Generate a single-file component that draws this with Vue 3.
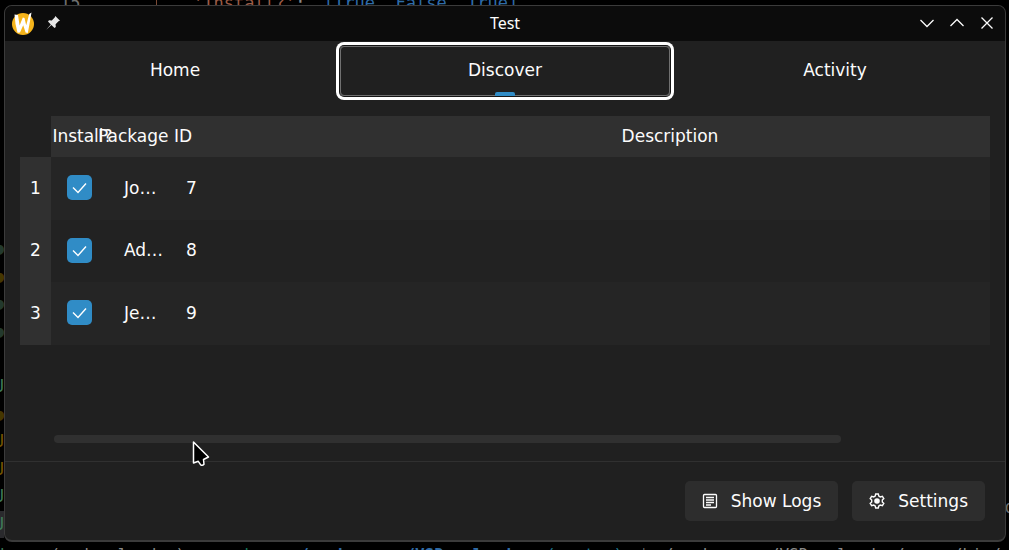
<script setup>
import { ref } from 'vue'

const tabs = ['Home', 'Discover', 'Activity']
const active = ref('Discover')

const rows = ref([
  { install: true, id: 'Jo…', description: '7' },
  { install: true, id: 'Ad…', description: '8' },
  { install: true, id: 'Je…', description: '9' },
])

const marks = [
  { text: '●', tone: 'green' },
  { text: '●', tone: 'olive' },
  { text: '●', tone: 'green' },
  { text: '●', tone: 'green' },
  { text: '', tone: 'green' },
  { text: 'U', tone: 'mint' },
  { text: '●', tone: 'olive' },
  { text: 'U', tone: 'gold' },
  { text: 'U', tone: 'gold' },
  { text: 'U', tone: 'mint' },
  { text: 'U', tone: 'mint selected' },
]

const prompt = [
  { text: 'h', tone: 'mint' },
  { text: '○', tone: 'blue' },
  { text: '(vsdownloader)', tone: 'grey' },
  { text: 'vscode', tone: 'teal' },
  { text: '➜', tone: 'grey' },
  { text: '/workspaces/VSDownloader', tone: 'blue bold' },
  { text: '(master)', tone: 'cyan' },
  { text: '$', tone: 'grey' },
  { text: '/workspaces/VSDownloader/.venv/bin/', tone: 'grey' },
]
</script>

<template>
  <div class="desktop">
    <div class="editor" aria-hidden="true">
      <span class="line-no">15</span>
      <span class="guide"></span>
      <code><span class="string">'Install?'</span><span class="grey">: </span><span class="blue list">[True, False, True]</span></code>
    </div>
    <div class="gutter" aria-hidden="true">
      <span v-for="(m, i) in marks" :key="i" :class="m.tone">{{ m.text }}</span>
    </div>
    <div class="edge" aria-hidden="true">d</div>
    <div class="terminal" aria-hidden="true">
      <span v-for="(p, i) in prompt" :key="i" :class="p.tone">{{ p.text }}</span>
    </div>

    <main class="window">
      <header class="titlebar">
        <div class="side">
          <svg class="logo" viewBox="0 0 24 24">
            <circle cx="12" cy="13" r="11" fill="#f5b41b" />
            <path d="M3.5 3.5 L7 4 L8.6 14.5 L11.8 6.5 L13.5 7 L15.2 14.2 L18.2 3 L20.5 1.5 L18.5 13 L16.8 22 L14.6 21.5 L12.2 14.2 L9 21.5 L6.5 21.8 L4.5 13 Z" fill="#fff" />
          </svg>
          <button class="plain" aria-label="Keep above">
            <svg class="pin" viewBox="0 0 16 16">
              <path d="M10.3 1 L15 5.7 L13.5 6.3 L10.6 9.2 L10.8 12 L9.5 13 L6.4 10 L1.2 14.8 L5.8 9.4 L3 6.5 L4 5.2 L6.8 5.4 L9.7 2.5 Z" fill="#e8e8e8" />
            </svg>
          </button>
        </div>
        <h1>Test</h1>
        <div class="side controls">
          <button class="plain" aria-label="Minimize"><svg viewBox="0 0 16 16"><path d="M1.5 5 L8 11.5 L14.5 5" /></svg></button>
          <button class="plain" aria-label="Maximize"><svg viewBox="0 0 16 16"><path d="M1.5 11 L8 4.5 L14.5 11" /></svg></button>
          <button class="plain" aria-label="Close"><svg viewBox="0 0 16 16"><path d="M2.5 2.5 L13.5 13.5 M13.5 2.5 L2.5 13.5" /></svg></button>
        </div>
      </header>

      <nav class="tabs" role="tablist">
        <button
          v-for="t in tabs"
          :key="t"
          class="tab"
          :class="{ active: t === active }"
          role="tab"
          :aria-selected="t === active"
          @click="active = t"
        >{{ t }}</button>
      </nav>

      <section class="view">
        <table>
          <colgroup>
            <col class="c-num" /><col class="c-check" /><col class="c-id" /><col />
          </colgroup>
          <thead>
            <tr>
              <td class="corner"></td>
              <th scope="col"><div>Install?</div></th>
              <th scope="col"><div>Package ID</div></th>
              <th scope="col"><div>Description</div></th>
            </tr>
          </thead>
          <tbody>
            <tr v-for="(r, i) in rows" :key="i">
              <th scope="row">{{ i + 1 }}</th>
              <td>
                <label class="check">
                  <input v-model="r.install" type="checkbox" :aria-label="'Install ' + r.id" />
                  <svg v-if="r.install" viewBox="0 0 25 25"><path d="M6 12.5 L11 17.5 L19 8.5" /></svg>
                </label>
              </td>
              <td>{{ r.id }}</td>
              <td>{{ r.description }}</td>
            </tr>
          </tbody>
        </table>
        <div class="scrollbar"><div class="thumb"></div></div>
      </section>

      <footer class="actions">
        <button class="action">
          <svg viewBox="0 0 18 18">
            <rect x="2.5" y="2.5" width="13" height="13" rx="1" />
            <path d="M5 5.5 H13 M5 8 H13 M5 10.5 H13 M5 13 H10" />
          </svg>
          Show Logs
        </button>
        <button class="action">
          <svg viewBox="-1 -1 18 18">
            <path class="cog" d="M6.7 1 H9.3 L9.8 3 L11.3 3.9 L13.4 3.3 L14.8 5.6 L13.3 7.1 V8.9 L14.8 10.4 L13.4 12.7 L11.3 12.1 L9.8 13 L9.3 15 H6.7 L6.2 13 L4.7 12.1 L2.6 12.7 L1.2 10.4 L2.7 8.9 V7.1 L1.2 5.6 L2.6 3.3 L4.7 3.9 L6.2 3 Z" />
            <circle class="hub" cx="8" cy="8" r="2.8" />
          </svg>
          Settings
        </button>
      </footer>
    </main>

    <svg class="cursor" viewBox="0 0 18 28" aria-hidden="true">
      <path d="M1.5 2 V23 L6.3 21.3 L8.7 24.8 Q10.5 26 12 24.3 L11.5 19.5 L16.5 17 Z" />
    </svg>
  </div>
</template>

<style>
body {
  background: #000;
}
</style>

<style scoped>
* {
  box-sizing: border-box;
}

.desktop {
  position: relative;
  height: 100vh;
  overflow: hidden;
  background: #000;
  color: #fcfcfc;
  font: 17px/24px "DejaVu Sans", sans-serif;
}

button {
  font: inherit;
  color: inherit;
  border: 0;
}

.editor,
.gutter,
.edge,
.terminal {
  position: absolute;
  font-family: "DejaVu Sans Mono", monospace;
  white-space: pre;
}

.editor {
  top: -7px;
  left: 60px;
  display: flex;
  line-height: 20px;
}

.editor code {
  font: inherit;
  margin-left: 36px;
}

.list {
  margin-left: 8px;
}

.line-no {
  width: 96px;
  color: #6e6e6e;
}

.guide {
  width: 1px;
  background: #7b4a35;
}

.gutter {
  top: 235px;
  bottom: 12px;
  left: 0;
  width: 4px;
  display: flex;
  flex-direction: column;
  justify-content: space-between;
  line-height: 27px;
}

.gutter span {
  height: 27px;
  flex: none;
  display: flex;
  justify-content: flex-end;
}

.edge {
  top: 495px;
  right: -6px;
  color: #6e6e6e;
}

.terminal {
  left: 0;
  right: 8px;
  bottom: -17px;
  display: flex;
  justify-content: space-between;
  font-size: 16px;
}

.grey { color: #8a8a8a; }
.string { color: #9c5c47; }
.blue { color: #2f6ca8; }
.teal { color: #147a5c; }
.cyan { color: #1c7892; }
.green { color: #23392d; }
.olive { color: #453700; }
.mint { color: #3e7a59; }
.gold { color: #735500; }
.bold { font-weight: bold; }
.selected { background: #2a2a2d; }

.window {
  position: absolute;
  inset: 5px 3px 8px 4px;
  display: flex;
  flex-direction: column;
  overflow: hidden;
  background: #202020;
  border: 1px solid #3b3b3b;
  border-bottom-width: 2px;
  border-radius: 8px;
}

.titlebar {
  display: grid;
  grid-template-columns: 1fr auto 1fr;
  align-items: center;
  height: 35px;
  flex: none;
  padding: 0 10px 1px 6px;
  background: #0c0c0c;
}

h1 {
  margin: 0 -2px 0 2px;
  font: 16px/24px "Noto Sans", sans-serif;
}

.side {
  display: flex;
  align-items: center;
  gap: 10px;
}

.logo {
  width: 24px;
  height: 24px;
}

.plain {
  display: flex;
  padding: 0;
  background: none;
}

.plain svg {
  width: 16px;
  height: 16px;
  fill: none;
  stroke: #fcfcfc;
  stroke-width: 1.3;
}

.plain .pin {
  stroke: none;
}

.controls {
  justify-content: flex-end;
  gap: 14px;
}

.tabs {
  display: grid;
  grid-template-columns: repeat(3, 1fr);
  flex: none;
  padding: 5px;
}

.tab {
  position: relative;
  height: 50px;
  padding: 0 0 2px;
  background: none;
  border: 1px solid transparent;
  border-radius: 4px;
}

.tab.active {
  border-color: #707070;
  box-shadow: 0 0 0 1px #151515, 0 0 0 4px #fff;
}

.tab.active::after {
  content: "";
  position: absolute;
  left: 50%;
  bottom: -1px;
  width: 20px;
  height: 4px;
  margin-left: -10px;
  border-radius: 2px 2px 0 0;
  background: #308cc6;
}

.view {
  flex: 1;
  display: flex;
  flex-direction: column;
  justify-content: space-between;
  overflow: hidden;
  margin: 15px 15px 0;
  padding-bottom: 18px;
}

table {
  width: calc(100% + 174px);
  table-layout: fixed;
  border-collapse: collapse;
  text-align: left;
}

.c-num { width: 31px; }
.c-check { width: 63px; }
.c-id { width: 62px; }

th {
  font-weight: normal;
  background: #303030;
}

thead th {
  height: 41px;
  padding: 0 0 2px;
}

thead div {
  display: flex;
  justify-content: center;
  white-space: nowrap;
}

td {
  padding: 0 10px 2px;
  white-space: nowrap;
}

tbody tr {
  height: 63px;
  background: #252525;
}

tbody tr:nth-child(even) {
  height: 62px;
  background: #222222;
}

tbody th {
  padding: 0 0 2px;
  text-align: center;
}

.check {
  display: grid;
  width: 25px;
  margin-left: 6px;
}

.check input,
.check svg {
  grid-area: 1 / 1;
  width: 25px;
  height: 25px;
  margin: 0;
}

.check input {
  appearance: none;
  border-radius: 5px;
  background: #3a3a3a;
}

.check input:checked {
  background: #308cc6;
}

.check svg {
  pointer-events: none;
  fill: none;
  stroke: #fff;
  stroke-width: 1.4;
}

.scrollbar {
  margin: 0 3px 0 34px;
}

.thumb {
  width: 84.3%;
  height: 8px;
  border-radius: 4px;
  background: #303030;
}

.actions {
  display: flex;
  justify-content: flex-end;
  gap: 14px;
  flex: none;
  padding: 19px 20px 19px;
  border-top: 1px solid #303030;
}

.action {
  display: flex;
  align-items: center;
  gap: 12px;
  height: 40px;
  padding: 0 17px 0 16px;
  border-radius: 5px;
  background: #2d2d2d;
}

.action svg {
  width: 18px;
  height: 18px;
  fill: none;
  stroke: #fcfcfc;
  stroke-width: 1.3;
}

.action .cog {
  stroke-width: 1.4;
}

.action .hub {
  fill: #fcfcfc;
  stroke: none;
}

.cursor {
  position: absolute;
  left: 192px;
  top: 440px;
  width: 18px;
  height: 28px;
  fill: #000;
  stroke: #fff;
  stroke-width: 1.5;
  stroke-linejoin: round;
}
</style>
